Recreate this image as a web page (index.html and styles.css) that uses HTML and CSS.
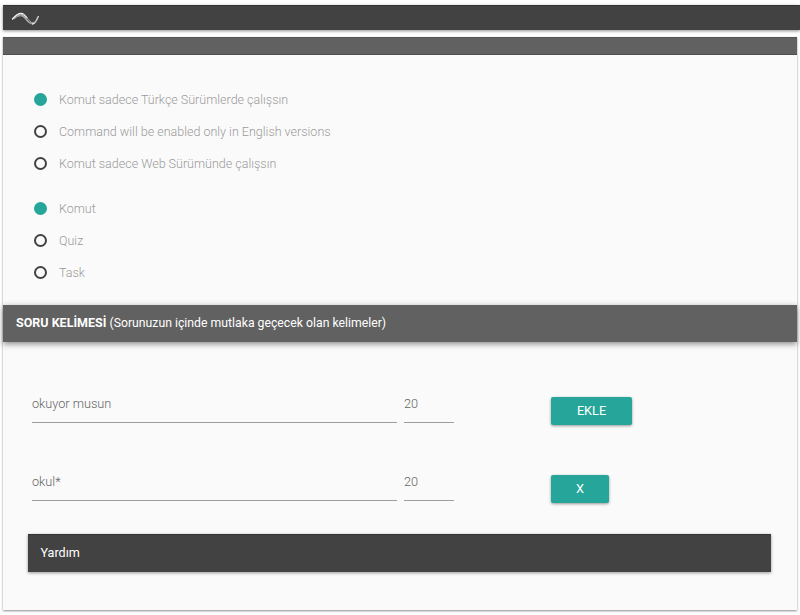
FILE: index.html
```html
<!DOCTYPE html>
<html lang="tr">
<head>
<meta charset="utf-8">
<title>Soru Kelimesi</title>
<link rel="stylesheet" href="styles.css">
</head>
<body>
<header class="topbar">
  <svg class="logo" width="27" height="13" viewBox="0 0 27 13" fill="none" stroke-width="0.9">
    <path stroke="#f5f5f5" stroke-width="1.4" d="M0 7.500C3 4 6 1 9.500 1.500C12 2 13.500 4 15 6"/>
    <path stroke="#c4c4c4" d="M2 7C5 4.500 7.500 2.500 10 3C13 4 15 9 18 11"/>
    <path stroke="#b0b0b0" d="M5 4.500C7.500 3.500 10 3.500 12 5.500C14 7.500 16 11 19.500 11.500"/>
    <path stroke="#b0b0b0" d="M8 2C11 3 13 6 15 8.500C17 10.500 19 12 21 12"/>
    <path stroke="#c4c4c4" d="M11 2C14 3.500 16 7.500 18 9.500C20 11 22 11.500 23 10.500"/>
    <path stroke="#e0e0e0" stroke-width="1.3" d="M20 12C23 12 25 8 26.500 4"/>
    <path stroke="#b0b0b0" d="M22 11C24 9.500 25 7 25.500 5"/>
  </svg>
</header>
<main class="panel">
  <div class="panel-head"></div>
  <section class="options">
    <div class="group">
      <div class="radio-row"><span class="radio on"></span><span class="label">Komut sadece Türkçe Sürümlerde çalışsın</span></div>
      <div class="radio-row"><span class="radio"></span><span class="label">Command will be enabled only in English versions</span></div>
      <div class="radio-row"><span class="radio"></span><span class="label">Komut sadece Web Sürümünde çalışsın</span></div>
    </div>
    <div class="group">
      <div class="radio-row"><span class="radio on"></span><span class="label">Komut</span></div>
      <div class="radio-row"><span class="radio"></span><span class="label">Quiz</span></div>
      <div class="radio-row"><span class="radio"></span><span class="label">Task</span></div>
    </div>
  </section>
  <div class="section-head"><b>SORU KELİMESİ</b> (Sorunuzun içinde mutlaka geçecek olan kelimeler)</div>
  <section class="words">
    <div class="word-row">
      <div class="field field-word">okuyor musun</div>
      <div class="field field-num">20</div>
      <button class="btn btn-add">EKLE</button>
    </div>
    <div class="word-row">
      <div class="field field-word">okul*</div>
      <div class="field field-num">20</div>
      <button class="btn btn-del">X</button>
    </div>
  </section>
  <div class="help">Yardım</div>
</main>
</body>
</html>
```
FILE: styles.css
```css
* { box-sizing: border-box; }
html, body { height: 100%; }
body {
  margin: 0;
  padding: 5px 0 4px 3px;
  background: #fff;
  font-family: Roboto, "Noto Sans", sans-serif;
  font-size: 13px;
  overflow: hidden;
}
.topbar {
  height: 25px;
  background: #424242;
  border-top: 1px solid #333;
  box-shadow: 0 1px 3px rgba(0,0,0,.45);
  display: flex;
  align-items: center;
  padding-left: 9px;
}
.panel {
  margin-top: 7px;
  margin-right: 3px;
  height: 573px;
  background: #fafafa;
  box-shadow: 0 1px 2px rgba(0,0,0,.45);
  display: flex;
  flex-direction: column;
}
.panel-head {
  height: 18px;
  flex: none;
  background: #616161;
  border-bottom: 1px solid #4d4d4d;
  border-top: 1px solid #555;
}
.options {
  height: 250px;
  flex: none;
  padding: 28px 0 0 31px;
  display: flex;
  flex-direction: column;
  gap: 13px;
}
.radio-row {
  height: 32px;
  display: flex;
  align-items: center;
  gap: 12px;
  color: #9a9a9a;
  font-size: 12.5px;
  font-weight: 300;
  line-height: 16px;
}
.label { padding-top: 2px; }
.radio {
  width: 13px;
  height: 13px;
  border-radius: 50%;
  border: 2px solid #424242;
  flex: none;
}
.radio.on {
  border-color: #26a69a;
  background: #26a69a;
}
.section-head {
  height: 37px;
  flex: none;
  background: #616161;
  color: #fff;
  font-size: 12.25px;
  line-height: 35px;
  padding-left: 13px;
  box-shadow: 0 2px 6px rgba(0,0,0,.45);
}
.section-head b { font-weight: 700; font-size: 12.5px; }
.words {
  height: 192px;
  flex: none;
  padding: 43px 0 0 29px;
  display: flex;
  flex-direction: column;
  gap: 40px;
}
.word-row {
  height: 38px;
  display: flex;
  align-items: flex-start;
}
.field {
  height: 38px;
  border-bottom: 1px solid #9e9e9e;
  color: #666;
  font-size: 12.7px;
  font-weight: 300;
  line-height: 38px;
}
.field-word { width: 365px; }
.field-num { width: 50px; margin-left: 7px; }
.btn {
  height: 28px;
  margin-left: 97px;
  margin-top: 12px;
  border: 0;
  border-radius: 2px;
  background: #26a69a;
  color: #fff;
  font: 400 12.7px Roboto, sans-serif;
  line-height: 26px;
  box-shadow: 0 1px 3px rgba(0,0,0,.4);
  padding: 0 0 1px 0;
}
.btn-add { width: 81px; }
.btn-del { width: 58px; }
.help {
  margin: 0 26px 0 25px;
  height: 38px;
  flex: none;
  background: #424242;
  border-top: 1px solid #333;
  color: #fff;
  font-size: 12.6px;
  line-height: 36px;
  padding-left: 12.5px;
  box-shadow: 0 1px 3px rgba(0,0,0,.4);
}
```
